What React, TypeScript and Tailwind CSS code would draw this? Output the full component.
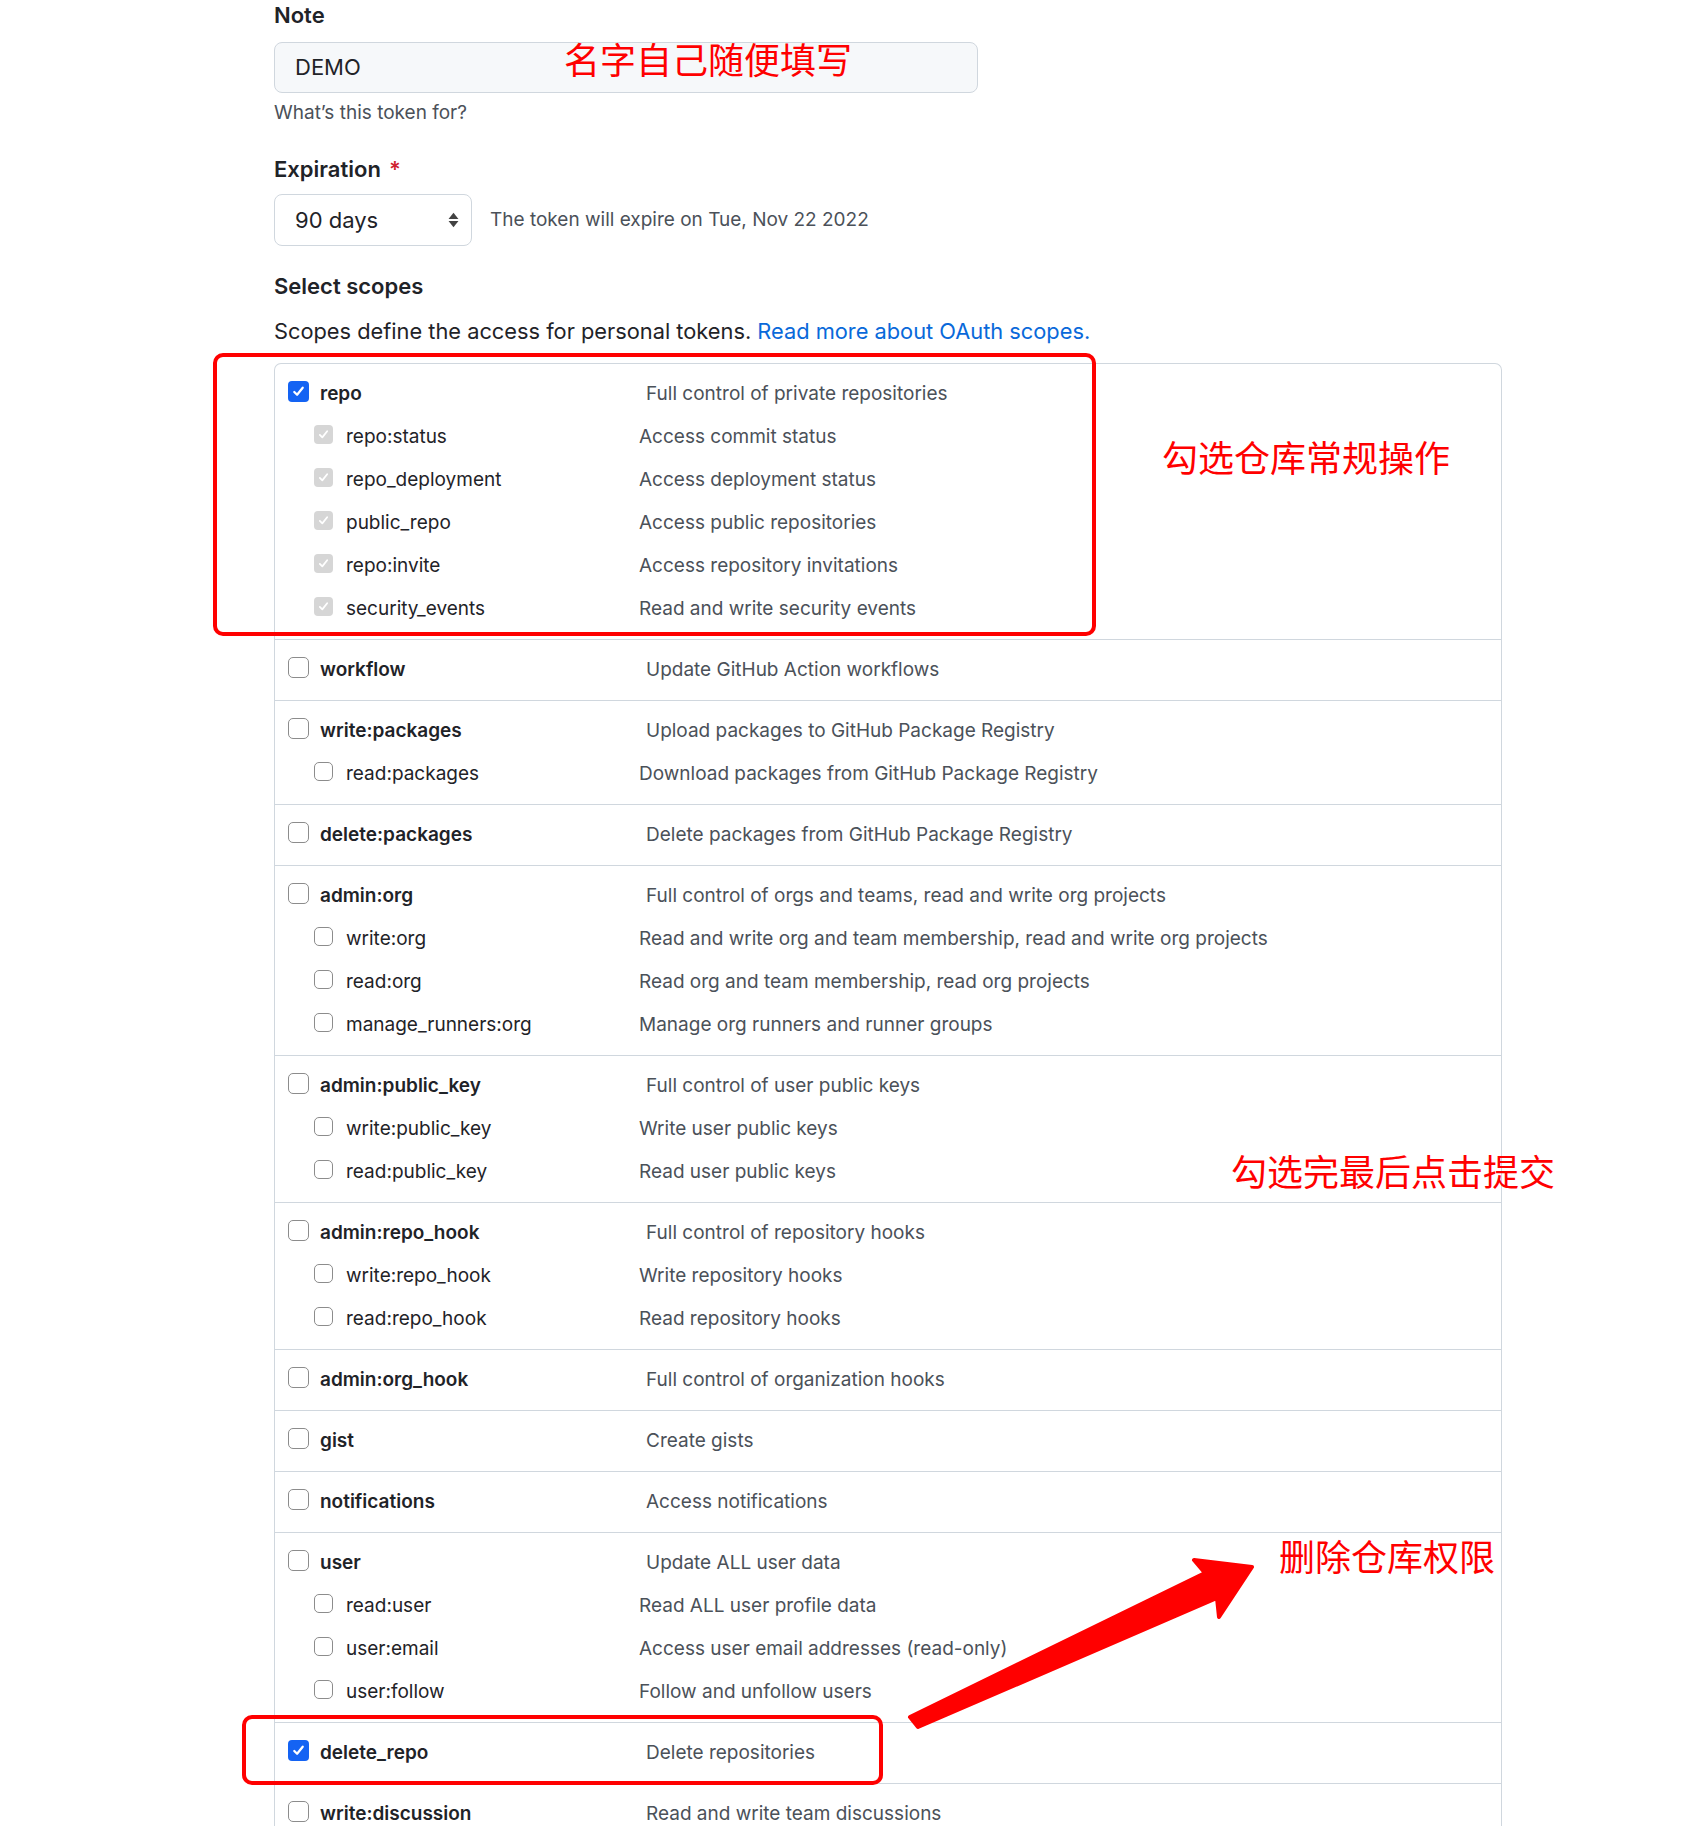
import React from "react";

type Scope = { name: string; desc: string; checked?: boolean; disabled?: boolean };
type Group = { main: Scope; children?: Scope[] };

const groups: Group[] = [
  {
    main: { name: "repo", desc: "Full control of private repositories", checked: true },
    children: [
      { name: "repo:status", desc: "Access commit status", checked: true, disabled: true },
      { name: "repo_deployment", desc: "Access deployment status", checked: true, disabled: true },
      { name: "public_repo", desc: "Access public repositories", checked: true, disabled: true },
      { name: "repo:invite", desc: "Access repository invitations", checked: true, disabled: true },
      { name: "security_events", desc: "Read and write security events", checked: true, disabled: true },
    ],
  },
  { main: { name: "workflow", desc: "Update GitHub Action workflows" } },
  {
    main: { name: "write:packages", desc: "Upload packages to GitHub Package Registry" },
    children: [{ name: "read:packages", desc: "Download packages from GitHub Package Registry" }],
  },
  { main: { name: "delete:packages", desc: "Delete packages from GitHub Package Registry" } },
  {
    main: { name: "admin:org", desc: "Full control of orgs and teams, read and write org projects" },
    children: [
      { name: "write:org", desc: "Read and write org and team membership, read and write org projects" },
      { name: "read:org", desc: "Read org and team membership, read org projects" },
      { name: "manage_runners:org", desc: "Manage org runners and runner groups" },
    ],
  },
  {
    main: { name: "admin:public_key", desc: "Full control of user public keys" },
    children: [
      { name: "write:public_key", desc: "Write user public keys" },
      { name: "read:public_key", desc: "Read user public keys" },
    ],
  },
  {
    main: { name: "admin:repo_hook", desc: "Full control of repository hooks" },
    children: [
      { name: "write:repo_hook", desc: "Write repository hooks" },
      { name: "read:repo_hook", desc: "Read repository hooks" },
    ],
  },
  { main: { name: "admin:org_hook", desc: "Full control of organization hooks" } },
  { main: { name: "gist", desc: "Create gists" } },
  { main: { name: "notifications", desc: "Access notifications" } },
  {
    main: { name: "user", desc: "Update ALL user data" },
    children: [
      { name: "read:user", desc: "Read ALL user profile data" },
      { name: "user:email", desc: "Access user email addresses (read-only)" },
      { name: "user:follow", desc: "Follow and unfollow users" },
    ],
  },
  { main: { name: "delete_repo", desc: "Delete repositories", checked: true } },
  {
    main: { name: "write:discussion", desc: "Read and write team discussions" },
    children: [{ name: "read:discussion", desc: "Read team discussions" }],
  },
];

function Checkbox({ checked, disabled, small }: { checked?: boolean; disabled?: boolean; small?: boolean }) {
  const size = small ? "h-[19px] w-[19px]" : "h-[21px] w-[21px]";
  if (checked && disabled) {
    return (
      <span className={`${size} -mt-[6px] flex shrink-0 items-center justify-center rounded-[4px] bg-[#d6d6d6]`}>
        <svg viewBox="0 0 16 16" className="h-[13px] w-[13px]">
          <path d="M3.5 8.5l3 3 6-7.5" fill="none" stroke="#fff" strokeWidth="2.2" strokeLinecap="round" strokeLinejoin="round" />
        </svg>
      </span>
    );
  }
  if (checked) {
    return (
      <span className={`${size} -mt-[6px] flex shrink-0 items-center justify-center rounded-[4px] bg-[#1463f3]`}>
        <svg viewBox="0 0 16 16" className="h-[15px] w-[15px]">
          <path d="M3.5 8.5l3 3 6-7.5" fill="none" stroke="#fff" strokeWidth="2.4" strokeLinecap="round" strokeLinejoin="round" />
        </svg>
      </span>
    );
  }
  return <span className={`${size} -mt-[6px] shrink-0 rounded-[5px] border-[1.5px] border-[#8c8c8c] bg-white`} />;
}

function Row({ scope, child }: { scope: Scope; child?: boolean }) {
  return (
    <div className="flex h-[43px] items-center">
      {child ? (
        <div className="flex w-[364px] shrink-0 items-center pl-[39px]">
          <Checkbox checked={scope.checked} disabled={scope.disabled} small />
          <span className="ml-[13px] text-[19px] text-[#1f2328]">{scope.name}</span>
        </div>
      ) : (
        <div className="flex w-[371px] shrink-0 items-center pl-[13px]">
          <Checkbox checked={scope.checked} disabled={scope.disabled} />
          <span className="ml-[11px] text-[19px] font-semibold text-[#1f2328]">{scope.name}</span>
        </div>
      )}
      <span className="text-[19px] text-[#4b5159]">{scope.desc}</span>
    </div>
  );
}

export default function App() {
  return (
    <div className="relative min-h-[1826px] w-[1698px] overflow-hidden bg-white font-['Inter','Noto_Sans_CJK_SC',sans-serif] text-[#1f2328]">
      <div className="ml-[274px] w-[1228px]">
        <div className="flex h-[30px] items-center text-[22px] font-semibold">Note</div>
        <div className="mt-[12px] flex h-[51px] w-[704px] items-center rounded-[8px] border border-[#d0d7de] bg-[#f6f8fa] px-[20px] text-[22px]">
          DEMO
        </div>
        <div className="mt-[8px] flex h-[24px] items-center text-[19px] text-[#4b5159]">What’s this token for?</div>

        <div className="mt-[30px] flex h-[28px] items-center text-[22px] font-semibold">
          Expiration <span className="ml-[8px] text-[#cf222e]">*</span>
        </div>
        <div className="mt-[11px] flex items-center">
          <div className="flex h-[52px] w-[198px] items-center justify-between rounded-[8px] border border-[#d0d7de] bg-white pl-[20px] pr-[12px] text-[22px]">
            <span>90 days</span>
            <svg viewBox="0 0 10 16" className="h-[18px] w-[11px]">
              <path d="M5 1.5L9.5 7H0.5Z" fill="#424242" />
              <path d="M5 14.5L9.5 9H0.5Z" fill="#424242" />
            </svg>
          </div>
          <span className="ml-[18px] text-[19px] text-[#4b5159]">The token will expire on Tue, Nov 22 2022</span>
        </div>

        <div className="mt-[26px] flex h-[28px] items-center text-[22px] font-semibold">Select scopes</div>
        <div className="mt-[16px] flex h-[30px] items-center text-[21.8px]">
          Scopes define the access for personal tokens.&nbsp;
          <span className="text-[#0969da]">Read more about OAuth scopes.</span>
        </div>

        <div className="mt-[17px] rounded-t-[7px] border-x border-t border-[#d0d7de]">
          {groups.map((g, i) => (
            <div key={g.main.name} className={`pt-[9px] pb-[8px] ${i > 0 ? "border-t border-[#d0d7de]" : ""}`}>
              <Row scope={g.main} />
              {g.children?.map((c) => (
                <Row key={c.name} scope={c} child />
              ))}
            </div>
          ))}
        </div>
      </div>

      {/* annotations */}
      <div className="pointer-events-none absolute left-[564px] top-[38px] text-[36px] leading-[46px] text-[#ff0000]">名字自己随便填写</div>
      <div className="pointer-events-none absolute left-[213px] top-[353px] h-[283px] w-[883px] rounded-[10px] border-[4px] border-[#ff0000]" />
      <div className="pointer-events-none absolute left-[1162px] top-[436px] text-[36px] leading-[46px] text-[#ff0000]">勾选仓库常规操作</div>
      <div className="pointer-events-none absolute left-[1231px] top-[1150px] text-[36px] leading-[46px] text-[#ff0000]">勾选完最后点击提交</div>
      <div className="pointer-events-none absolute left-[1279px] top-[1535px] text-[36px] leading-[46px] text-[#ff0000]">删除仓库权限</div>
      <div className="pointer-events-none absolute left-[242px] top-[1715px] h-[70px] w-[641px] rounded-[10px] border-[4px] border-[#ff0000]" />
      <svg className="pointer-events-none absolute left-0 top-0" width="1698" height="1826">
        <polygon
          points="910,1717 1205,1573 1194,1560 1252,1567 1219,1617 1217,1598 918,1727"
          fill="#ff0000"
          stroke="#ff0000"
          strokeWidth="4"
          strokeLinejoin="round"
        />
      </svg>
    </div>
  );
}
